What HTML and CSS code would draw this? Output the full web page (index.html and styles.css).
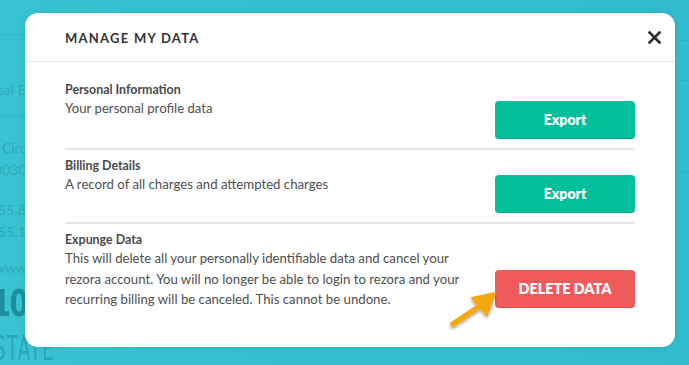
FILE: index.html
```html
<!DOCTYPE html>
<html>
<head>
<meta charset="utf-8">
<link rel="stylesheet" href="styles.css">
</head>
<body>
<div class="page">
  <div class="bg-left">
    <div class="bg-rule"></div>
    <div class="bg-t t1">Real Estate</div>
    <div class="bg-rule r2"></div>
    <div class="bg-t t2">1 Test Circle</div>
    <div class="bg-t t3">30030</div>
    <div class="bg-t t4">555.89</div>
    <div class="bg-t t5">555.1</div>
    <div class="bg-t t6">www.fa</div>
    <div class="bg-big">10</div>
    <div class="bg-thin">STATE</div>
  </div>
  <div class="bg-right">
    <div class="bg-rule r3"></div>
    <div class="bg-t t7">co</div>
    <div class="bg-rule r4"></div>
    <div class="bg-t t8">de</div>
    <div class="bg-rule r5"></div>
    <div class="bg-t t9">mp</div>
  </div>

  <div class="modal">
    <div class="modal-head">
      <h1 class="modal-title">MANAGE MY DATA</h1>
      <svg class="close" width="13" height="13" viewBox="0 0 13 13"><path d="M1.5 1.5 L11.5 11.5 M11.5 1.5 L1.5 11.5" stroke="#2b2b2b" stroke-width="2.6" stroke-linecap="square"/></svg>
    </div>
    <div class="modal-body">
      <div class="row row-first">
        <div class="info">
          <div class="info-title">Personal Information</div>
          <div class="info-desc">Your personal profile data</div>
        </div>
        <button class="btn btn-green btn-r1">Export</button>
      </div>
      <div class="row">
        <div class="info">
          <div class="info-title">Billing Details</div>
          <div class="info-desc">A record of all charges and attempted charges</div>
        </div>
        <button class="btn btn-green btn-r2">Export</button>
      </div>
      <div class="row row-last">
        <div class="info">
          <div class="info-title">Expunge Data</div>
          <div class="info-desc">This will delete all your personally identifiable data and cancel your<br>rezora account. You will no longer be able to login to rezora and your<br>recurring billing will be canceled. This cannot be undone.</div>
        </div>
        <button class="btn btn-red btn-r3">DELETE DATA</button>
      </div>
    </div>
    <svg class="arrow" width="56" height="44" viewBox="0 0 56 44">
      <defs><filter id="sh" x="-30%" y="-30%" width="160%" height="160%"><feDropShadow dx="0" dy="2" stdDeviation="1.5" flood-color="#000" flood-opacity="0.35"/></filter></defs>
      <g filter="url(#sh)">
        <path d="M6 36 L33 18" stroke="#f5a90f" stroke-width="5.5" stroke-linecap="round"/>
        <path d="M25 10 L48 5 L40 27 Z" fill="#f5a90f" stroke="#f5a90f" stroke-width="2" stroke-linejoin="round"/>
      </g>
    </svg>
  </div>
</div>
</body>
</html>
```

FILE: styles.css
```css
* { box-sizing: border-box; }
html, body { margin: 0; padding: 0; }
body {
  width: 689px;
  height: 365px;
  overflow: hidden;
  font-family: "Lato", "Noto Sans", sans-serif;
}
.page {
  position: relative;
  width: 689px;
  height: 365px;
  background: linear-gradient(90deg, #38c3d2 0%, #32bfd0 50%, #30bdcd 100%);
  display: flex;
  justify-content: space-between;
  overflow: hidden;
}
.bg-left {
  width: 80px;
  display: flex;
  flex-direction: column;
  overflow: hidden;
}
.bg-right {
  width: 30px;
  display: flex;
  flex-direction: column;
  overflow: hidden;
}
.bg-rule { height: 1px; background: rgba(20,140,160,0.18); margin-top: 34px; }
.bg-rule.r2 { margin-top: 17px; }
.bg-rule.r3 { margin-top: 40px; }
.bg-rule.r4 { margin-top: 14px; }
.bg-rule.r5 { margin-top: 48px; }
.bg-t {
  color: rgba(25,140,160,0.45);
  font-size: 14px;
  line-height: 18px;
  white-space: nowrap;
}
.t1 { margin-top: 46px; margin-left: -12px; }
.t2 { margin-top: 22px; margin-left: -38px; }
.t3 { margin-top: 4px; margin-left: -14px; }
.t4 { margin-top: 22px; margin-left: -10px; }
.t5 { margin-top: 4px; margin-left: -10px; }
.t6 { margin-top: 18px; margin-left: -6px; }
.t7 { margin-top: 7px; margin-left: -4px; }
.t8 { margin-top: 24px; margin-left: -8px; }
.t9 { margin-top: 64px; margin-left: -4px; }
.bg-big {
  font-family: "DejaVu Sans Condensed", "Liberation Sans Narrow", sans-serif;
  font-weight: bold;
  font-size: 38px;
  line-height: 40px;
  color: #1b8ea0;
  margin-top: 6px;
  margin-left: -8px;
  letter-spacing: -2px;
  transform: scaleX(0.8);
  transform-origin: left;
}
.bg-thin {
  font-family: "DejaVu Sans Condensed", sans-serif;
  font-weight: 200;
  font-size: 34px;
  line-height: 34px;
  color: rgba(25,140,160,0.5);
  margin-top: 8px;
  margin-left: -6px;
  letter-spacing: 2px;
  transform: scaleX(0.6);
  transform-origin: left;
}

.modal {
  position: absolute;
  left: 25px;
  top: 13px;
  width: 650px;
  height: 334px;
  background: #fff;
  border-radius: 13px;
  box-shadow: 0 0 8px rgba(0,0,0,0.08);
}
.modal-head {
  height: 49px;
  border-bottom: 1px solid #e6e4ec;
  display: flex;
  align-items: center;
  justify-content: space-between;
  padding: 0 14px 0 40px;
}
.modal-title {
  margin: 2px 0 0 0;
  font-size: 13px;
  font-weight: 700;
  letter-spacing: 1.25px;
  color: #333;
}
.close { display: block; margin-top: 1px; }
.modal-body {
  padding: 0 40px;
}
.row {
  display: flex;
  justify-content: space-between;
  align-items: flex-start;
  border-bottom: 2px solid #e9e5e6;
  padding-top: 8px;
  padding-bottom: 9px;
}
.row-first { padding-top: 20px; }
.row-last { border-bottom: none; padding-top: 8px; }
.info-title {
  font-size: 12.4px;
  line-height: 16px;
  font-weight: 700;
  color: #4a4a4a;
}
.info-desc {
  font-size: 13.2px;
  line-height: 20.5px;
  color: #4f4f4f;
}
.btn {
  width: 140px;
  height: 38px;
  border: none;
  border-radius: 4px;
  color: #fff;
  font-family: "Lato", sans-serif;
  font-weight: 800;
  font-size: 14px;
  padding: 0;
  flex: none;
}
.btn-green { background: #00bf9b; border-bottom: 1px solid #00a887; }
.btn-red { background: #f05a5b; border-bottom: 1px solid #de4a4c; font-size: 14.4px; }
.btn-r1 { margin-top: 19px; }
.btn-r2 { margin-top: 17px; }
.btn-r3 { margin-top: 38px; }
.arrow {
  position: absolute;
  left: 422px;
  top: 275px;
}
```
